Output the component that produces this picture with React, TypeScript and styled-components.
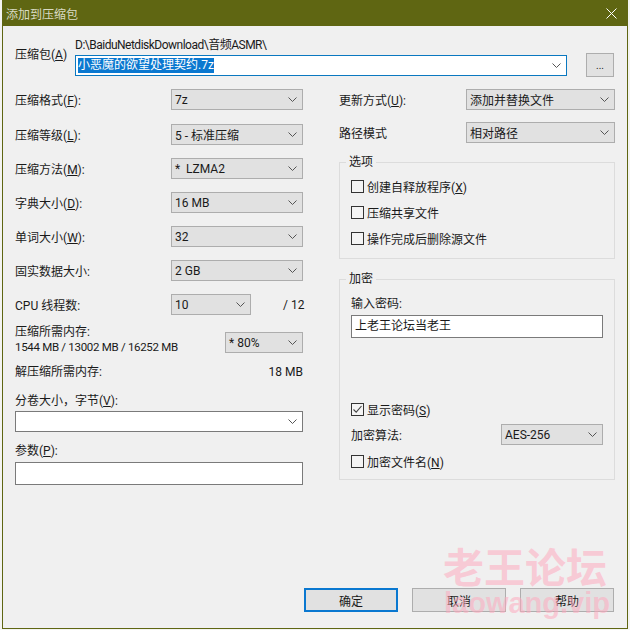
import React from 'react';
import styled, { createGlobalStyle } from 'styled-components';

const GlobalStyle = createGlobalStyle`
  html, body {
    margin: 0;
    padding: 0;
    background: #f4f4f2;
  }
  * {
    box-sizing: border-box;
  }
`;

const Page = styled.div`
  width: 630px;
  height: 630px;
  padding: 0 2px 1px 2px;
  overflow: hidden;
  font-family: Roboto, "Noto Sans CJK SC", sans-serif;
  font-size: 12px;
  color: #1a1a1a;
`;

const Dialog = styled.div`
  position: relative;
  width: 626px;
  height: 629px;
  background: #f0f0f0;
  border: 1px solid #5f6612;
  border-top: 0;
  display: flex;
  flex-direction: column;
`;

const TitleBar = styled.div`
  height: 26px;
  flex: none;
  background: #5f6612;
  color: #d8dac4;
  display: flex;
  align-items: center;
  justify-content: space-between;
  padding: 0 10px 0 3px;
  font-size: 12px;
`;

const CloseIcon = () => (
  <svg width="11" height="11" viewBox="0 0 11 11">
    <path d="M0.5 0.5 L10.5 10.5 M10.5 0.5 L0.5 10.5" stroke="#fff" strokeWidth="1" fill="none" />
  </svg>
);

const Body = styled.div`
  flex: 1;
  padding: 12px 12px 16px 12px;
  display: flex;
  flex-direction: column;
`;

const ArchiveRow = styled.div`
  display: flex;
  height: 39px;
  margin-bottom: 12px;
`;

const ArchiveLabel = styled.div`
  width: 60px;
  padding-top: 7px;
`;

const ArchiveField = styled.div`
  width: 492px;
  display: flex;
  flex-direction: column;
`;

const PathLine = styled.div`
  height: 17px;
  line-height: 15px;
  letter-spacing: -0.5px;
`;

const BrowseButton = styled.div`
  width: 28px;
  height: 24px;
  margin: 15px 0 0 19px;
  background: #e1e1e1;
  border: 1px solid #adadad;
  display: flex;
  align-items: center;
  justify-content: center;
  font-size: 10px;
`;

const Columns = styled.div`
  display: flex;
  flex: 1;
`;

const LeftColumn = styled.div`
  width: 288px;
  display: flex;
  flex-direction: column;
`;

const RightColumn = styled.div`
  width: 276px;
  margin-left: 36px;
  display: flex;
  flex-direction: column;
`;

const Row = styled.div<{ $gap?: number }>`
  display: flex;
  align-items: center;
  justify-content: space-between;
  height: 21px;
  margin-bottom: ${(p) => p.$gap ?? 13}px;
`;

const Combo = styled.div<{ $width: number; $tone?: 'gray' | 'white' | 'focus' }>`
  width: ${(p) => p.$width}px;
  height: 21px;
  flex: none;
  display: flex;
  align-items: center;
  justify-content: space-between;
  padding: 0 5px 0 3px;
  background: ${(p) => (p.$tone === 'white' || p.$tone === 'focus' ? '#fff' : '#e1e1e1')};
  border: 1px solid
    ${(p) => (p.$tone === 'focus' ? '#0a78c0' : p.$tone === 'white' ? '#7a7a7a' : '#adadad')};
`;

const ChevronSvg = styled.svg`
  flex: none;
`;

const Chevron = () => (
  <ChevronSvg width="9" height="5" viewBox="0 0 9 5">
    <path d="M0.5 0.5 L4.5 4.5 L8.5 0.5" stroke="#555" strokeWidth="1" fill="none" />
  </ChevronSvg>
);

const FocusCombo = styled(Combo)`
  padding-left: 2px;
`;

const Selected = styled.span`
  background: #0a78d0;
  color: #fff;
  line-height: 15px;
`;

const ComboText = styled.span`
  white-space: pre;
`;

const Key = styled.u`
  text-underline-offset: 1px;
`;

const CpuRow = styled(Row)`
  margin-bottom: 9px;
`;

const CpuCombo = styled(Combo)`
  margin-left: auto;
`;

const Total = styled.span`
  width: 20px;
  flex: none;
  margin-left: 32px;
  text-align: right;
  white-space: nowrap;
`;

const MemoryRow = styled.div`
  display: flex;
  justify-content: space-between;
  height: 36px;
  margin-bottom: 4px;
`;

const MemoryText = styled.div`
  line-height: 15px;
  padding-top: 1px;
`;

const MemoryFigures = styled.div`
  font-size: 11.5px;
  letter-spacing: -0.3px;
`;

const MemoryCombo = styled(Combo)`
  margin-top: 8px;
`;

const PlainRow = styled.div<{ $gap: number }>`
  display: flex;
  justify-content: space-between;
  height: 16px;
  line-height: 16px;
  margin-bottom: ${(p) => p.$gap}px;
`;

const FieldLabel = styled.div<{ $gap: number }>`
  height: 15px;
  line-height: 15px;
  margin-bottom: ${(p) => p.$gap}px;
`;

const VolumeCombo = styled(Combo)`
  margin-bottom: 12px;
`;

const TextBox = styled.div<{ $width?: number }>`
  width: ${(p) => (p.$width ? `${p.$width}px` : '100%')};
  height: 23px;
  background: #fff;
  border: 1px solid #7a7a7a;
  padding: 0 3px;
  line-height: 20px;
`;

const GroupBox = styled.div<{ $height: number; $gap: number }>`
  position: relative;
  height: ${(p) => p.$height}px;
  margin-bottom: ${(p) => p.$gap}px;
  border: 1px solid #dcdcdc;
  padding: 11px 11px 0 11px;
`;

const Legend = styled.span`
  position: absolute;
  top: -8px;
  left: 6px;
  padding: 0 3px;
  background: #f0f0f0;
  line-height: 15px;
`;

const OptionList = styled.div`
  padding-top: 6px;
`;

const CheckRow = styled.div<{ $gap?: number }>`
  display: flex;
  align-items: center;
  gap: 3px;
  height: 13px;
  margin-bottom: ${(p) => p.$gap ?? 0}px;
`;

const ShowPasswordRow = styled(CheckRow)`
  margin-top: 65px;
`;

const AlgorithmRow = styled(Row)`
  width: 252px;
`;

const CheckBox = styled.span`
  width: 13px;
  height: 13px;
  flex: none;
  background: #f4f4f4;
  border: 1px solid #333;
  display: flex;
  align-items: center;
  justify-content: center;
`;

const CheckMark = () => (
  <svg width="11" height="11" viewBox="0 0 11 11">
    <path d="M1.5 5.5 L4.2 8.2 L9.5 2" stroke="#444" strokeWidth="1.1" fill="none" />
  </svg>
);

const PasswordLabel = styled(FieldLabel)`
  margin-top: 6px;
`;

const Footer = styled.div`
  display: flex;
  justify-content: flex-end;
  gap: 14px;
  margin-right: 1px;
`;

const Button = styled.div<{ $primary?: boolean }>`
  width: 94px;
  height: 24px;
  background: #e1e1e1;
  border: ${(p) => (p.$primary ? '2px solid #0a78d0' : '1px solid #adadad')};
  display: flex;
  align-items: center;
  justify-content: center;
`;

const Watermark = styled.div`
  position: absolute;
  left: 440px;
  top: 541px;
  width: 180px;
  color: rgba(255, 170, 190, 0.55);
  font-weight: 700;
  text-align: left;
  pointer-events: none;
  white-space: nowrap;
`;

const WatermarkTitle = styled.div`
  font-family: "Noto Sans CJK SC", sans-serif;
  font-size: 41px;
  line-height: 48px;
`;

const WatermarkUrl = styled.div`
  font-family: "Liberation Sans", sans-serif;
  font-size: 29px;
  line-height: 28px;
  padding-left: 1px;
`;

const leftCombos = [
  { label: '压缩格式', key: 'F', value: '7z', gap: 14 },
  { label: '压缩等级', key: 'L', value: '5 - 标准压缩', gap: 13 },
  { label: '压缩方法', key: 'M', value: '*  LZMA2', gap: 13 },
  { label: '字典大小', key: 'D', value: '16 MB', gap: 13 },
  { label: '单词大小', key: 'W', value: '32', gap: 13 },
];

const options = [
  { label: '创建自释放程序', key: 'X', gap: 13 },
  { label: '压缩共享文件', key: '', gap: 13 },
  { label: '操作完成后删除源文件', key: '', gap: 0 },
];

export default function App() {
  return (
    <Page>
      <GlobalStyle />
      <Dialog>
        <TitleBar>
          <span>添加到压缩包</span>
          <CloseIcon />
        </TitleBar>
        <Body>
          <ArchiveRow>
            <ArchiveLabel>
              压缩包(<Key>A</Key>)
            </ArchiveLabel>
            <ArchiveField>
              <PathLine>D:\BaiduNetdiskDownload\音频ASMR\</PathLine>
              <FocusCombo $width={492} $tone="focus">
                <Selected>小恶魔的欲望处理契约.7z</Selected>
                <Chevron />
              </FocusCombo>
            </ArchiveField>
            <BrowseButton>...</BrowseButton>
          </ArchiveRow>
          <Columns>
            <LeftColumn>
              {leftCombos.map((c) => (
                <Row key={c.key} $gap={c.gap}>
                  <span>
                    {c.label}(<Key>{c.key}</Key>):
                  </span>
                  <Combo $width={132}>
                    <ComboText>{c.value}</ComboText>
                    <Chevron />
                  </Combo>
                </Row>
              ))}
              <Row>
                <span>固实数据大小:</span>
                <Combo $width={132}>
                  <ComboText>2 GB</ComboText>
                  <Chevron />
                </Combo>
              </Row>
              <CpuRow>
                <span>CPU 线程数:</span>
                <CpuCombo $width={80}>
                  <ComboText>10</ComboText>
                  <Chevron />
                </CpuCombo>
                <Total>/ 12</Total>
              </CpuRow>
              <MemoryRow>
                <MemoryText>
                  压缩所需内存:
                  <MemoryFigures>1544 MB / 13002 MB / 16252 MB</MemoryFigures>
                </MemoryText>
                <MemoryCombo $width={78}>
                  <ComboText>* 80%</ComboText>
                  <Chevron />
                </MemoryCombo>
              </MemoryRow>
              <PlainRow $gap={14}>
                <span>解压缩所需内存:</span>
                <span>18 MB</span>
              </PlainRow>
              <FieldLabel $gap={2}>
                分卷大小，字节(<Key>V</Key>):
              </FieldLabel>
              <VolumeCombo $width={288} $tone="white">
                <span />
                <Chevron />
              </VolumeCombo>
              <FieldLabel $gap={3}>
                参数(<Key>P</Key>):
              </FieldLabel>
              <TextBox />
            </LeftColumn>
            <RightColumn>
              <Row $gap={12}>
                <span>
                  更新方式(<Key>U</Key>):
                </span>
                <Combo $width={149}>
                  <ComboText>添加并替换文件</ComboText>
                  <Chevron />
                </Combo>
              </Row>
              <Row $gap={19}>
                <span>路径模式</span>
                <Combo $width={149}>
                  <ComboText>相对路径</ComboText>
                  <Chevron />
                </Combo>
              </Row>
              <GroupBox $height={97} $gap={20}>
                <Legend>选项</Legend>
                <OptionList>
                  {options.map((o) => (
                    <CheckRow key={o.label} $gap={o.gap}>
                      <CheckBox />
                      <span>
                        {o.label}
                        {o.key && (
                          <>
                            (<Key>{o.key}</Key>)
                          </>
                        )}
                      </span>
                    </CheckRow>
                  ))}
                </OptionList>
              </GroupBox>
              <GroupBox $height={201} $gap={0}>
                <Legend>加密</Legend>
                <PasswordLabel $gap={3}>输入密码:</PasswordLabel>
                <TextBox $width={252}>上老王论坛当老王</TextBox>
                <ShowPasswordRow $gap={8}>
                  <CheckBox>
                    <CheckMark />
                  </CheckBox>
                  <span>
                    显示密码(<Key>S</Key>)
                  </span>
                </ShowPasswordRow>
                <AlgorithmRow $gap={10}>
                  <span>加密算法:</span>
                  <Combo $width={102}>
                    <ComboText>AES-256</ComboText>
                    <Chevron />
                  </Combo>
                </AlgorithmRow>
                <CheckRow>
                  <CheckBox />
                  <span>
                    加密文件名(<Key>N</Key>)
                  </span>
                </CheckRow>
              </GroupBox>
            </RightColumn>
          </Columns>
          <Footer>
            <Button $primary>确定</Button>
            <Button>取消</Button>
            <Button>帮助</Button>
          </Footer>
        </Body>
        <Watermark>
          <WatermarkTitle>老王论坛</WatermarkTitle>
          <WatermarkUrl>laowang.vip</WatermarkUrl>
        </Watermark>
      </Dialog>
    </Page>
  );
}
